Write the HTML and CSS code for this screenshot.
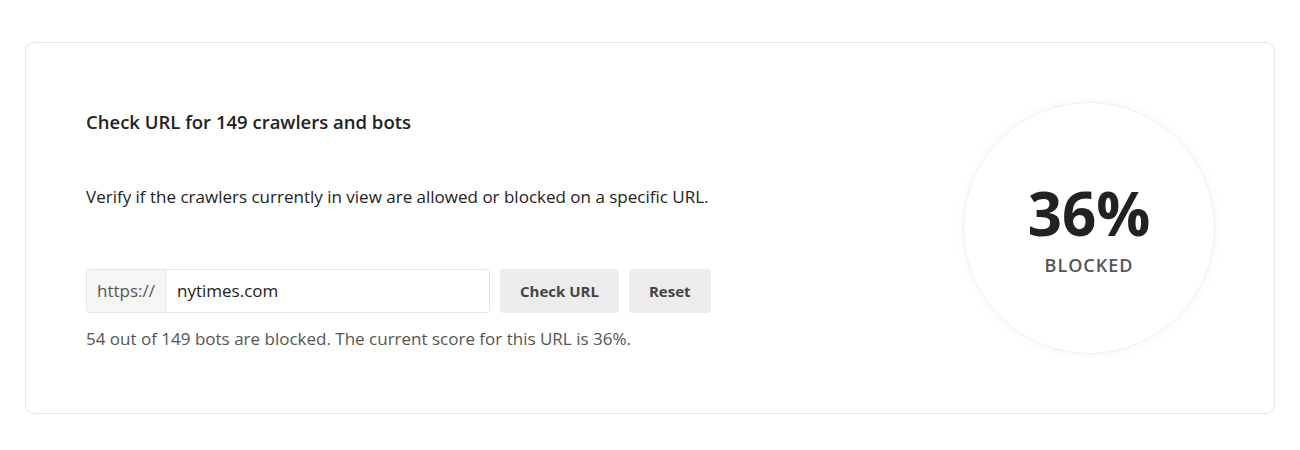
FILE: index.html
```html
<!DOCTYPE html>
<html lang="en">
<head>
    <meta charset="UTF-8">
    <meta name="viewport" content="width=device-width, initial-scale=1.0">
    <title>Check URL</title>
    <link rel="stylesheet" href="styles.css">
</head>
<body>
    <div class="page">
        <div class="card">
            <div class="checker">
                <h2 class="title">Check URL for 149 crawlers and bots</h2>
                <p class="desc">Verify if the crawlers currently in view are allowed or blocked on a specific URL.</p>
                <form class="url-form" onsubmit="return false;">
                    <div class="input-group">
                        <span class="prefix">https://</span>
                        <input type="text" class="url-input" value="nytimes.com">
                    </div>
                    <button type="submit" class="btn">Check URL</button>
                    <button type="button" class="btn">Reset</button>
                </form>
                <p class="status">54 out of 149 bots are blocked. The current score for this URL is 36%.</p>
            </div>
            <div class="score">
                <div class="score-value">36%</div>
                <div class="score-label">BLOCKED</div>
            </div>
        </div>
    </div>
</body>
</html>
```

FILE: styles.css
```css
body {
    font-family: "Open Sans", "Noto Sans", Arial, sans-serif;
    background-color: #fff;
    color: #222;
    margin: 0;
    padding: 0;
}
.page {
    padding: 42px 25px;
}
.card {
    display: flex;
    align-items: center;
    justify-content: space-between;
    height: 372px;
    box-sizing: border-box;
    padding: 0 59px 0 60px;
    border: 1px solid #e8e8e8;
    border-radius: 9px;
    background-color: #fff;
}
.checker {
    padding-top: 4px;
}
.title {
    margin: 0;
    font-size: 18.5px;
    font-weight: 600;
    line-height: 24px;
    color: #222;
}
.desc {
    margin: 51px 0 0;
    font-size: 17px;
    line-height: 24px;
}
.url-form {
    display: flex;
    gap: 10px;
    margin-top: 60px;
}
.input-group {
    display: flex;
    width: 404px;
    height: 44px;
    box-sizing: border-box;
    border: 1px solid #e6e6e6;
    border-radius: 4px;
    overflow: hidden;
}
.prefix {
    display: flex;
    align-items: center;
    padding: 0 10px;
    background-color: #f6f6f6;
    border-right: 1px solid #e6e6e6;
    color: #555;
    font-size: 17px;
}
.url-input {
    flex: 1;
    border: none;
    outline: none;
    padding: 0 11px;
    font-family: inherit;
    font-size: 17px;
    color: #222;
}
.btn {
    height: 44px;
    padding: 0 20px;
    border: none;
    border-radius: 4px;
    background-color: #ececec;
    color: #444;
    font-family: inherit;
    font-size: 15px;
    font-weight: 700;
    cursor: pointer;
}
.status {
    margin: 14px 0 0;
    font-size: 17px;
    line-height: 24px;
    color: #555;
}
.score {
    width: 252px;
    height: 252px;
    border-radius: 50%;
    border: 1px solid #eee;
    box-sizing: border-box;
    box-shadow: 0 0 12px rgba(0, 0, 0, 0.04);
    display: flex;
    flex-direction: column;
    align-items: center;
    justify-content: center;
}
.score-value {
    font-size: 60px;
    font-weight: 700;
    line-height: 1;
    color: #222;
    margin-top: 4px;
}
.score-label {
    margin-top: 10px;
    font-size: 18px;
    font-weight: 600;
    letter-spacing: 1px;
    color: #555;
}
```
